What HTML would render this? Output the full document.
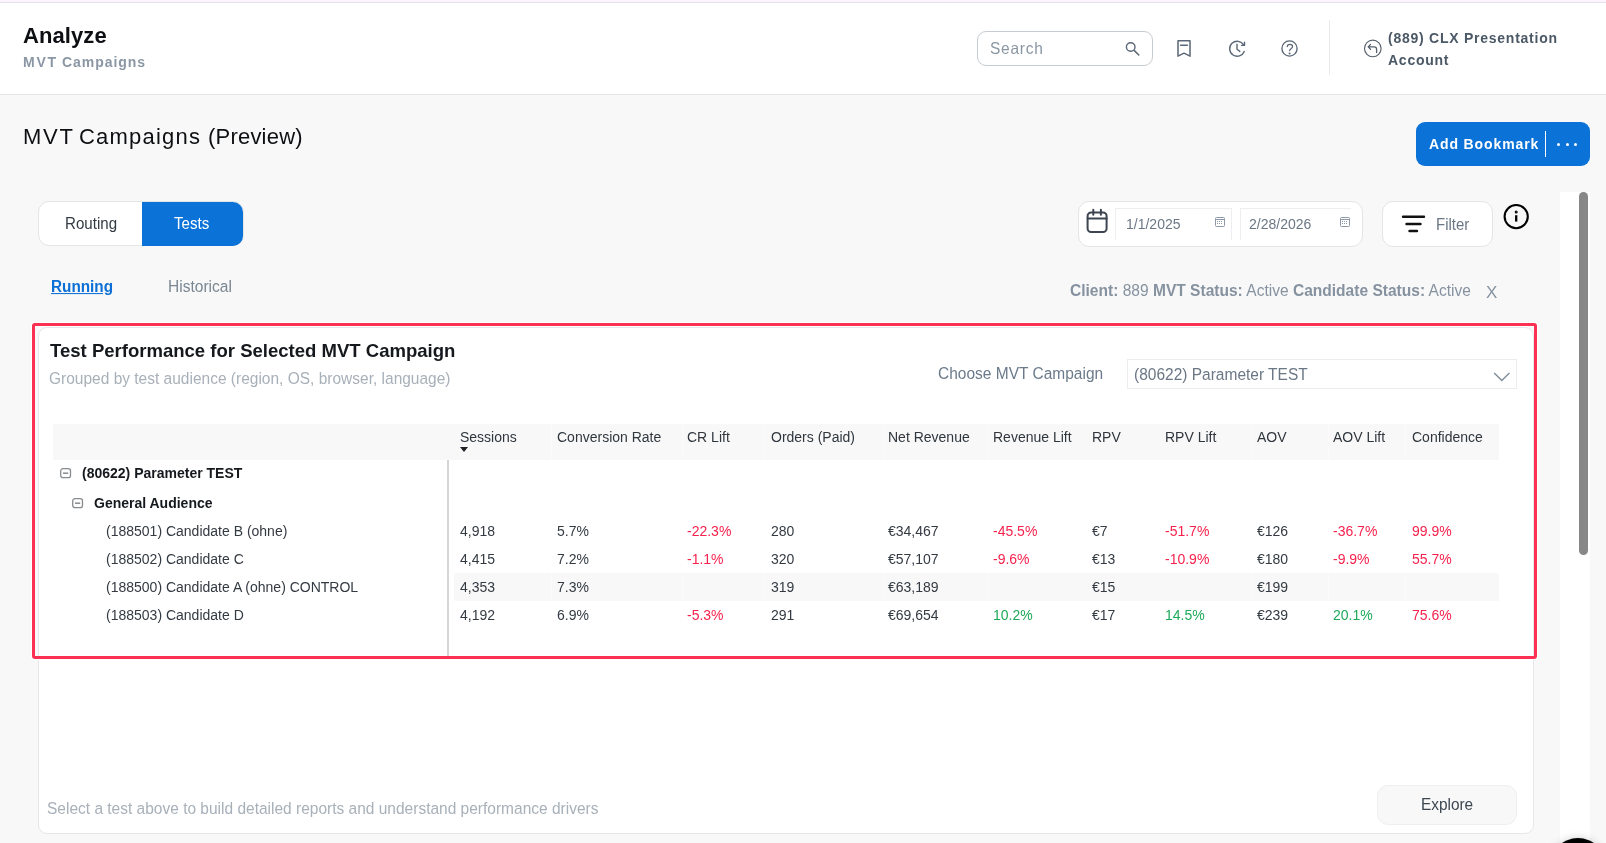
<!DOCTYPE html>
<html><head><meta charset="utf-8"><title>MVT Campaigns</title>
<style>
html,body{margin:0;padding:0}
body{width:1606px;height:843px;overflow:hidden;position:relative;background:#f8f8f8;font-family:"Liberation Sans", sans-serif}
.t{position:absolute;line-height:1;white-space:nowrap;will-change:transform}
.b{position:absolute}
</style></head><body>
<div class="b" style="left:0px;top:0px;width:1606px;height:2px;background:#fdf5fd"></div>
<div class="b" style="left:0px;top:2px;width:1606px;height:1px;background:#e7e1ed"></div>
<div class="b" style="left:0px;top:3px;width:1606px;height:91px;background:#fff"></div>
<div class="b" style="left:0px;top:94px;width:1606px;height:1px;background:#e4e5e7"></div>
<div class="t" style="left:22.60px;top:25.18px;font-size:22px;font-weight:700;color:#0d0f12;letter-spacing:0.08px;">Analyze</div>
<div class="t" style="left:23.10px;top:55.15px;font-size:14px;font-weight:700;color:#8b97a4;letter-spacing:1.8px;">MVT</div>
<div class="t" style="left:61.70px;top:55.15px;font-size:14px;font-weight:700;color:#8b97a4;letter-spacing:0.95px;">Campaigns</div>
<div class="b" style="left:977px;top:31px;width:176px;height:35px;box-sizing:border-box;border:1px solid #c7ccd2;border-radius:9px;background:#fff"></div>
<div class="t" style="left:989.50px;top:40.88px;font-size:15.5px;transform:scaleY(1.05);transform-origin:0 13.12px;color:#8a96a3;letter-spacing:0.75px;">Search</div>
<svg class="b" style="left:0;top:0" width="1606" height="100" viewBox="0 0 1606 100" fill="none" stroke="#5a6776" stroke-linecap="round" stroke-linejoin="round">
<circle cx="1130.7" cy="47" r="4.3" stroke-width="1.4"/>
<path d="M1134.4 50.6 L1138.8 55" stroke-width="1.5"/>
<path d="M1178 40.8 H1190 V56.2 L1184 53.2 L1178 56.2 Z" stroke-width="1.5"/>
<path d="M1180.6 45.2 H1187.4" stroke-width="1.4"/>
<path d="M1244.2 51.4 A7.5 7.5 0 1 1 1243.6 44.9" stroke-width="1.4"/>
<path d="M1244.5 42.2 L1244.5 45.4 L1241.6 45.4" stroke-width="1.4"/>
<path d="M1237 44.3 V49.3 L1239.8 51.4" stroke-width="1.4"/>
<circle cx="1289.5" cy="48.5" r="7.6" stroke-width="1.35"/>
<path d="M1287.3 46.6 C1287.3 43.6 1292.6 43.6 1292.6 46.6 C1292.6 48.6 1289.6 49 1289.6 50.7" stroke-width="1.25"/>
<circle cx="1289.6" cy="53.4" r="0.45" stroke-width="1.1"/>
<circle cx="1372.8" cy="48.45" r="8.3" stroke-width="1.15" stroke="#56616e"/>
<path d="M1376.6 52.5 V49.3 Q1376.6 46.9 1374.2 46.9 H1368.6 M1370.6 44.4 L1368.2 46.9 L1370.6 49.4" stroke-width="1.3" stroke="#56616e"/>
</svg>
<div class="b" style="left:1329px;top:20px;width:1px;height:55px;background:#ebebeb"></div>
<div class="t" style="left:1388.00px;top:31.15px;font-size:14px;font-weight:700;color:#4b5866;letter-spacing:0.75px;">(889) CLX Presentation</div>
<div class="t" style="left:1388.00px;top:52.65px;font-size:14px;font-weight:700;color:#4b5866;letter-spacing:0.75px;">Account</div>
<div class="t" style="left:22.80px;top:125.88px;font-size:22px;color:#0d0f12;letter-spacing:1.7px;">MVT</div>
<div class="t" style="left:78.60px;top:125.88px;font-size:22px;color:#0d0f12;letter-spacing:1.2px;">Campaigns</div>
<div class="t" style="left:208.00px;top:125.88px;font-size:22px;color:#0d0f12;letter-spacing:0.21px;">(Preview)</div>
<div class="b" style="left:1416px;top:122px;width:174px;height:44px;background:#0b72d8;border-radius:9px"></div>
<div class="t" style="left:1429.00px;top:136.90px;font-size:14px;font-weight:700;color:#fff;letter-spacing:0.88px;">Add Bookmark</div>
<div class="b" style="left:1545px;top:131px;width:1px;height:26px;background:#fff"></div>
<div class="b" style="left:1557.2px;top:142.5px;width:3px;height:3px;background:#fff;border-radius:50%"></div>
<div class="b" style="left:1565.7px;top:142.5px;width:3px;height:3px;background:#fff;border-radius:50%"></div>
<div class="b" style="left:1574.1px;top:142.5px;width:3px;height:3px;background:#fff;border-radius:50%"></div>
<div class="b" style="left:38px;top:201px;width:206px;height:45px;box-sizing:border-box;border:1px solid #e3e5e8;border-radius:11px;background:#fff;overflow:hidden"></div>
<div class="b" style="left:142px;top:202px;width:101px;height:43.5px;background:#0b72d8;border-radius:0 10px 10px 0"></div>
<div class="t" style="left:64.60px;top:215.52px;font-size:15.1px;transform:scaleY(1.12);transform-origin:0 12.78px;color:#333b44;">Routing</div>
<div class="t" style="left:173.60px;top:215.52px;font-size:15.1px;transform:scaleY(1.12);transform-origin:0 12.78px;color:#fff;">Tests</div>
<div class="t" style="left:50.60px;top:279.15px;font-size:15.3px;transform:scaleY(1.04);transform-origin:0 12.95px;font-weight:700;color:#0b6fd6;text-decoration:underline;text-underline-offset:1.2px;">Running</div>
<div class="t" style="left:168.00px;top:278.94px;font-size:15.55px;transform:scaleY(1.08);transform-origin:0 13.16px;color:#7a8793;">Historical</div>
<div class="b" style="left:1078px;top:201px;width:285px;height:46px;box-sizing:border-box;border:1px solid #e3e5e8;border-radius:11px;background:#fff"></div>
<svg class="b" style="left:1080px;top:203px" width="36" height="40" viewBox="1080 203 36 40" fill="none" stroke="#3d4650" stroke-width="2" stroke-linecap="round">
<rect x="1087.6" y="212.4" width="19" height="19.6" rx="3.5"/>
<path d="M1087.6 218.6 H1106.6 M1093.3 209.8 V214.8 M1100.9 209.8 V214.8"/>
</svg>
<div class="b" style="left:1115px;top:208px;width:117px;height:32px;box-sizing:border-box;border:1px solid #eceef0;border-bottom:none;background:#fff"></div>
<div class="b" style="left:1240px;top:208px;width:111px;height:32px;box-sizing:border-box;border:1px solid #eceef0;border-bottom:none;border-right:none;background:#fff"></div>
<div class="t" style="left:1126.00px;top:216.75px;font-size:14px;color:#6b7785;">1/1/2025</div>
<div class="t" style="left:1249.00px;top:216.75px;font-size:14px;color:#6b7785;">2/28/2026</div>
<svg class="b" style="left:1214px;top:216px" width="12" height="12" viewBox="0 0 12 12" fill="none" stroke="#8d99a6" stroke-width="1">
<rect x="1.5" y="1.5" width="9" height="9" rx="1"/><path d="M1.5 3.5 H10.5"/></svg>
<div class="b" style="left:1217px;top:221px;width:1.3px;height:1px;background:#8d99a6"></div>
<div class="b" style="left:1219px;top:221px;width:1.3px;height:1px;background:#8d99a6"></div>
<div class="b" style="left:1221px;top:221px;width:1.3px;height:1px;background:#8d99a6"></div>
<div class="b" style="left:1217px;top:223px;width:1.3px;height:1px;background:#8d99a6"></div>
<div class="b" style="left:1219px;top:223px;width:1.3px;height:1px;background:#8d99a6"></div>
<div class="b" style="left:1221px;top:223px;width:1.3px;height:1px;background:#8d99a6"></div>
<svg class="b" style="left:1338.5px;top:216px" width="12" height="12" viewBox="0 0 12 12" fill="none" stroke="#8d99a6" stroke-width="1">
<rect x="1.5" y="1.5" width="9" height="9" rx="1"/><path d="M1.5 3.5 H10.5"/></svg>
<div class="b" style="left:1341.5px;top:221px;width:1.3px;height:1px;background:#8d99a6"></div>
<div class="b" style="left:1343.5px;top:221px;width:1.3px;height:1px;background:#8d99a6"></div>
<div class="b" style="left:1345.5px;top:221px;width:1.3px;height:1px;background:#8d99a6"></div>
<div class="b" style="left:1341.5px;top:223px;width:1.3px;height:1px;background:#8d99a6"></div>
<div class="b" style="left:1343.5px;top:223px;width:1.3px;height:1px;background:#8d99a6"></div>
<div class="b" style="left:1345.5px;top:223px;width:1.3px;height:1px;background:#8d99a6"></div>
<div class="b" style="left:1382px;top:201px;width:111px;height:46px;box-sizing:border-box;border:1px solid #e3e5e8;border-radius:11px;background:#fff"></div>
<svg class="b" style="left:1398px;top:212px" width="32" height="24" viewBox="1398 212 32 24" fill="none" stroke="#111" stroke-width="2.4" stroke-linecap="round">
<path d="M1403 216.8 H1424 M1406.5 224 H1420.5 M1409.5 231 H1417"/></svg>
<div class="t" style="left:1436.00px;top:217.20px;font-size:15px;transform:scaleY(1.08);transform-origin:0 12.70px;color:#6b7785;">Filter</div>
<svg class="b" style="left:1500px;top:201px" width="32" height="32" viewBox="1500 201 32 32" fill="none" stroke="#000">
<circle cx="1516.2" cy="216.6" r="11.6" stroke-width="2.1"/>
<path d="M1516.2 215.2 V221.6" stroke-width="2.3"/>
<circle cx="1516.2" cy="211.9" r="0.6" stroke-width="1.8"/></svg>
<div class="t" style="left:1070.00px;top:282.84px;font-size:15.55px;transform:scaleY(1.05);transform-origin:0 13.16px;color:#8692a0;"><b>Client:</b> 889 <b>MVT Status:</b> Active <b>Candidate Status:</b> Active</div>
<div class="t" style="left:1485.50px;top:283.61px;font-size:17px;color:#8692a0;">X</div>
<div class="b" style="left:1560px;top:192px;width:30px;height:651px;background:#fff"></div>
<div class="b" style="left:1579px;top:192px;width:9px;height:363px;background:#888;border-radius:5px"></div>
<div class="b" style="left:38px;top:327px;width:1496px;height:507px;box-sizing:border-box;border:1px solid #e5e7ea;border-radius:9px;background:#fff"></div>
<div class="b" style="left:32px;top:323px;width:1505px;height:336px;box-sizing:border-box;border:3px solid #fb3052;border-radius:3px;box-shadow:0 0 0 1px #fff"></div>
<div class="b" style="left:35px;top:326px;width:1499px;height:1px;background:#fff"></div>
<div class="t" style="left:49.80px;top:342.10px;font-size:18.55px;font-weight:700;color:#15181c;">Test Performance for Selected MVT Campaign</div>
<div class="t" style="left:48.50px;top:371.08px;font-size:15.5px;transform:scaleY(1.1);transform-origin:0 13.12px;color:#a8b0b9;">Grouped by test audience (region, OS, browser, language)</div>
<div class="t" style="left:937.50px;top:366.08px;font-size:15.5px;transform:scaleY(1.1);transform-origin:0 13.12px;color:#6b7a8a;">Choose MVT Campaign</div>
<div class="b" style="left:1127px;top:359px;width:390px;height:30px;box-sizing:border-box;border:1px solid #ececec;background:#fff"></div>
<div class="t" style="left:1133.50px;top:367.08px;font-size:15.5px;transform:scaleY(1.1);transform-origin:0 13.12px;color:#6b7785;">(80622) Parameter TEST</div>
<svg class="b" style="left:1490px;top:368px" width="24" height="16" viewBox="1490 368 24 16" fill="none" stroke="#7f8c99" stroke-width="1.35">
<path d="M1494.2 373 L1501.8 380.6 L1509.4 373"/></svg>
<div class="b" style="left:53px;top:424px;width:1446px;height:36px;background:#f8f8f8"></div>
<div class="b" style="left:551px;top:424px;width:1px;height:36px;background:#fbfbfb"></div>
<div class="b" style="left:682px;top:424px;width:1px;height:36px;background:#fbfbfb"></div>
<div class="b" style="left:764px;top:424px;width:1px;height:36px;background:#fbfbfb"></div>
<div class="b" style="left:882.6px;top:424px;width:1px;height:36px;background:#fbfbfb"></div>
<div class="b" style="left:987.6px;top:424px;width:1px;height:36px;background:#fbfbfb"></div>
<div class="b" style="left:1251px;top:424px;width:1px;height:36px;background:#fbfbfb"></div>
<div class="b" style="left:1327.5px;top:424px;width:1px;height:36px;background:#fbfbfb"></div>
<div class="b" style="left:1405px;top:424px;width:1px;height:36px;background:#fbfbfb"></div>
<div class="t" style="left:459.50px;top:430.15px;font-size:14px;color:#2f363d;">Sessions</div>
<div class="t" style="left:556.50px;top:430.15px;font-size:14px;color:#2f363d;">Conversion Rate</div>
<div class="t" style="left:686.50px;top:430.15px;font-size:14px;color:#2f363d;">CR Lift</div>
<div class="t" style="left:770.50px;top:430.15px;font-size:14px;color:#2f363d;">Orders (Paid)</div>
<div class="t" style="left:887.50px;top:430.15px;font-size:14px;color:#2f363d;">Net Revenue</div>
<div class="t" style="left:993.00px;top:430.15px;font-size:14px;color:#2f363d;">Revenue Lift</div>
<div class="t" style="left:1091.50px;top:430.15px;font-size:14px;color:#2f363d;">RPV</div>
<div class="t" style="left:1164.50px;top:430.15px;font-size:14px;color:#2f363d;">RPV Lift</div>
<div class="t" style="left:1256.50px;top:430.15px;font-size:14px;color:#2f363d;">AOV</div>
<div class="t" style="left:1333.00px;top:430.15px;font-size:14px;color:#2f363d;">AOV Lift</div>
<div class="t" style="left:1411.50px;top:430.15px;font-size:14px;color:#2f363d;">Confidence</div>
<svg class="b" style="left:459px;top:446px" width="10" height="7" viewBox="0 0 10 7"><path d="M1 1 H9 L5 6 Z" fill="#1d2126"/></svg>
<div class="b" style="left:447px;top:460px;width:2px;height:196px;background:#d6d6d6"></div>
<svg class="b" style="left:60px;top:468px" width="12" height="12" viewBox="0 0 12 12" fill="none" stroke="#888b8f"><rect x="0.7" y="0.7" width="9.8" height="9" rx="2.2" stroke-width="1.3"/><path d="M3 5.2 H8.2" stroke-width="1.5"/></svg>
<div class="t" style="left:81.50px;top:466.15px;font-size:14px;font-weight:700;color:#15181c;">(80622) Parameter TEST</div>
<svg class="b" style="left:72px;top:498px" width="12" height="12" viewBox="0 0 12 12" fill="none" stroke="#888b8f"><rect x="0.7" y="0.7" width="9.8" height="9" rx="2.2" stroke-width="1.3"/><path d="M3 5.2 H8.2" stroke-width="1.5"/></svg>
<div class="t" style="left:94.00px;top:495.65px;font-size:14px;font-weight:700;color:#15181c;">General Audience</div>
<div class="b" style="left:454px;top:573px;width:1045px;height:28px;background:#f8f8f8"></div>
<div class="b" style="left:551px;top:573px;width:1px;height:28px;background:#fbfbfb"></div>
<div class="b" style="left:682px;top:573px;width:1px;height:28px;background:#fbfbfb"></div>
<div class="b" style="left:764px;top:573px;width:1px;height:28px;background:#fbfbfb"></div>
<div class="b" style="left:882.6px;top:573px;width:1px;height:28px;background:#fbfbfb"></div>
<div class="b" style="left:987.6px;top:573px;width:1px;height:28px;background:#fbfbfb"></div>
<div class="b" style="left:1251px;top:573px;width:1px;height:28px;background:#fbfbfb"></div>
<div class="b" style="left:1327.5px;top:573px;width:1px;height:28px;background:#fbfbfb"></div>
<div class="b" style="left:1405px;top:573px;width:1px;height:28px;background:#fbfbfb"></div>
<div class="t" style="left:105.50px;top:524.15px;font-size:14px;color:#333a42;">(188501) Candidate B (ohne)</div>
<div class="t" style="left:459.50px;top:524.15px;font-size:14px;color:#333a42;">4,918</div>
<div class="t" style="left:556.50px;top:524.15px;font-size:14px;color:#333a42;">5.7%</div>
<div class="t" style="left:686.50px;top:524.15px;font-size:14px;color:#f5224d;">-22.3%</div>
<div class="t" style="left:770.50px;top:524.15px;font-size:14px;color:#333a42;">280</div>
<div class="t" style="left:887.50px;top:524.15px;font-size:14px;color:#333a42;">€34,467</div>
<div class="t" style="left:993.00px;top:524.15px;font-size:14px;color:#f5224d;">-45.5%</div>
<div class="t" style="left:1091.50px;top:524.15px;font-size:14px;color:#333a42;">€7</div>
<div class="t" style="left:1164.50px;top:524.15px;font-size:14px;color:#f5224d;">-51.7%</div>
<div class="t" style="left:1256.50px;top:524.15px;font-size:14px;color:#333a42;">€126</div>
<div class="t" style="left:1333.00px;top:524.15px;font-size:14px;color:#f5224d;">-36.7%</div>
<div class="t" style="left:1411.50px;top:524.15px;font-size:14px;color:#f5224d;">99.9%</div>
<div class="t" style="left:105.50px;top:552.15px;font-size:14px;color:#333a42;">(188502) Candidate C</div>
<div class="t" style="left:459.50px;top:552.15px;font-size:14px;color:#333a42;">4,415</div>
<div class="t" style="left:556.50px;top:552.15px;font-size:14px;color:#333a42;">7.2%</div>
<div class="t" style="left:686.50px;top:552.15px;font-size:14px;color:#f5224d;">-1.1%</div>
<div class="t" style="left:770.50px;top:552.15px;font-size:14px;color:#333a42;">320</div>
<div class="t" style="left:887.50px;top:552.15px;font-size:14px;color:#333a42;">€57,107</div>
<div class="t" style="left:993.00px;top:552.15px;font-size:14px;color:#f5224d;">-9.6%</div>
<div class="t" style="left:1091.50px;top:552.15px;font-size:14px;color:#333a42;">€13</div>
<div class="t" style="left:1164.50px;top:552.15px;font-size:14px;color:#f5224d;">-10.9%</div>
<div class="t" style="left:1256.50px;top:552.15px;font-size:14px;color:#333a42;">€180</div>
<div class="t" style="left:1333.00px;top:552.15px;font-size:14px;color:#f5224d;">-9.9%</div>
<div class="t" style="left:1411.50px;top:552.15px;font-size:14px;color:#f5224d;">55.7%</div>
<div class="t" style="left:105.50px;top:580.15px;font-size:14px;color:#333a42;">(188500) Candidate A (ohne) CONTROL</div>
<div class="t" style="left:459.50px;top:580.15px;font-size:14px;color:#333a42;">4,353</div>
<div class="t" style="left:556.50px;top:580.15px;font-size:14px;color:#333a42;">7.3%</div>
<div class="t" style="left:770.50px;top:580.15px;font-size:14px;color:#333a42;">319</div>
<div class="t" style="left:887.50px;top:580.15px;font-size:14px;color:#333a42;">€63,189</div>
<div class="t" style="left:1091.50px;top:580.15px;font-size:14px;color:#333a42;">€15</div>
<div class="t" style="left:1256.50px;top:580.15px;font-size:14px;color:#333a42;">€199</div>
<div class="t" style="left:105.50px;top:608.15px;font-size:14px;color:#333a42;">(188503) Candidate D</div>
<div class="t" style="left:459.50px;top:608.15px;font-size:14px;color:#333a42;">4,192</div>
<div class="t" style="left:556.50px;top:608.15px;font-size:14px;color:#333a42;">6.9%</div>
<div class="t" style="left:686.50px;top:608.15px;font-size:14px;color:#f5224d;">-5.3%</div>
<div class="t" style="left:770.50px;top:608.15px;font-size:14px;color:#333a42;">291</div>
<div class="t" style="left:887.50px;top:608.15px;font-size:14px;color:#333a42;">€69,654</div>
<div class="t" style="left:993.00px;top:608.15px;font-size:14px;color:#1faa59;">10.2%</div>
<div class="t" style="left:1091.50px;top:608.15px;font-size:14px;color:#333a42;">€17</div>
<div class="t" style="left:1164.50px;top:608.15px;font-size:14px;color:#1faa59;">14.5%</div>
<div class="t" style="left:1256.50px;top:608.15px;font-size:14px;color:#333a42;">€239</div>
<div class="t" style="left:1333.00px;top:608.15px;font-size:14px;color:#1faa59;">20.1%</div>
<div class="t" style="left:1411.50px;top:608.15px;font-size:14px;color:#f5224d;">75.6%</div>
<div class="t" style="left:46.80px;top:800.88px;font-size:15.5px;transform:scaleY(1.1);transform-origin:0 13.12px;color:#a8b0b9;">Select a test above to build detailed reports and understand performance drivers</div>
<div class="b" style="left:1377px;top:785px;width:140px;height:40px;box-sizing:border-box;border:1px solid #efefef;border-radius:11px;background:#f8f8f8"></div>
<div class="t" style="left:1421.00px;top:797.26px;font-size:15.4px;transform:scaleY(1.08);transform-origin:0 13.04px;color:#3d4752;">Explore</div>
<div class="b" style="left:1549.5px;top:838px;width:56px;height:56px;background:#000;border-radius:50%;box-shadow:0 0 8px rgba(0,0,0,0.18)"></div>
</body></html>
